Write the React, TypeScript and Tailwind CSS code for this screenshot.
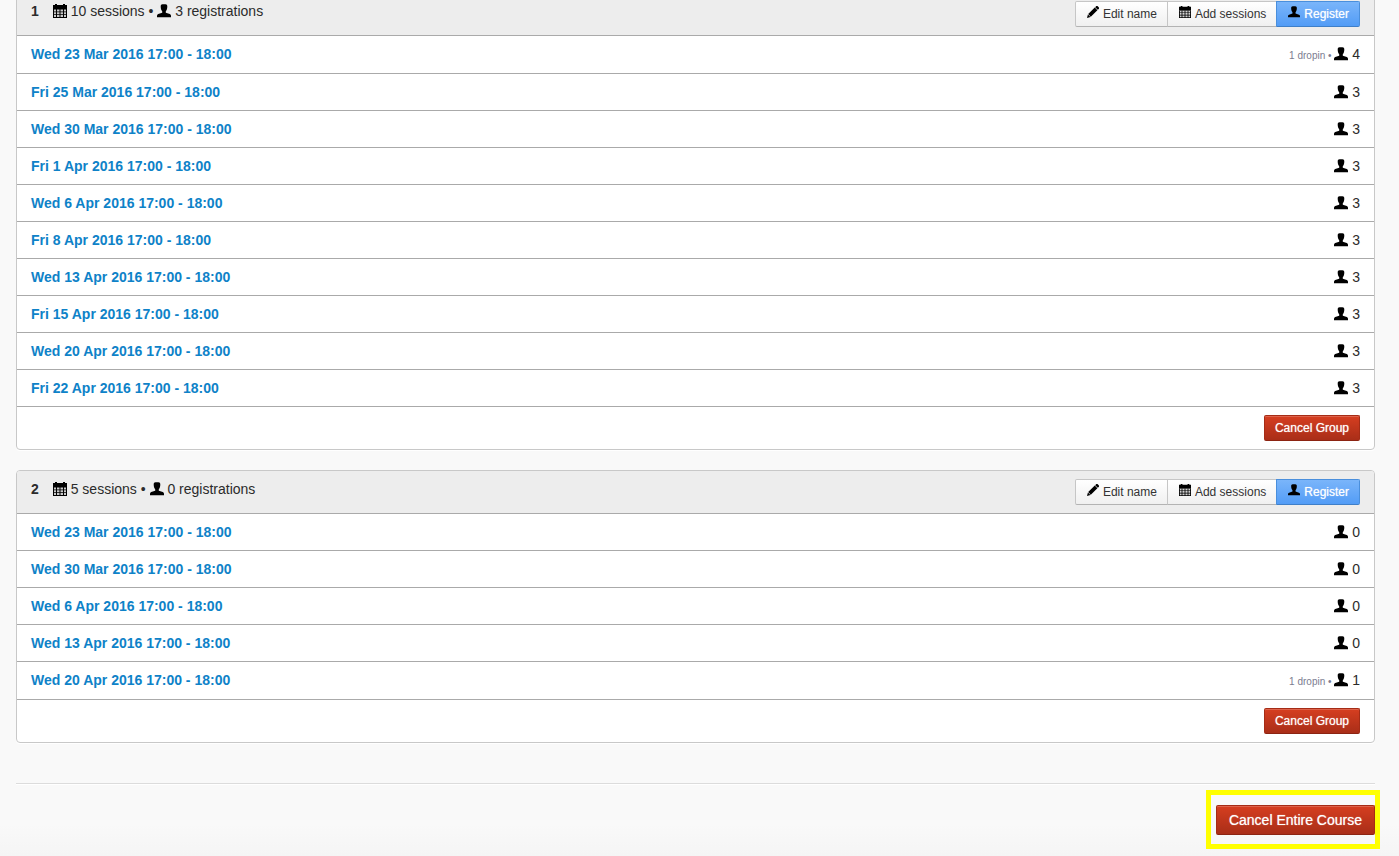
import type { ReactNode } from "react";
import clsx from "clsx";

interface Session {
  label: string;
  attendees: number;
  dropins?: number;
}

interface Group {
  name: string;
  registrations: number;
  sessions: Session[];
}

const groups: Group[] = [
  {
    name: "1",
    registrations: 3,
    sessions: [
      { label: "Wed 23 Mar 2016 17:00 - 18:00", attendees: 4, dropins: 1 },
      { label: "Fri 25 Mar 2016 17:00 - 18:00", attendees: 3 },
      { label: "Wed 30 Mar 2016 17:00 - 18:00", attendees: 3 },
      { label: "Fri 1 Apr 2016 17:00 - 18:00", attendees: 3 },
      { label: "Wed 6 Apr 2016 17:00 - 18:00", attendees: 3 },
      { label: "Fri 8 Apr 2016 17:00 - 18:00", attendees: 3 },
      { label: "Wed 13 Apr 2016 17:00 - 18:00", attendees: 3 },
      { label: "Fri 15 Apr 2016 17:00 - 18:00", attendees: 3 },
      { label: "Wed 20 Apr 2016 17:00 - 18:00", attendees: 3 },
      { label: "Fri 22 Apr 2016 17:00 - 18:00", attendees: 3 },
    ],
  },
  {
    name: "2",
    registrations: 0,
    sessions: [
      { label: "Wed 23 Mar 2016 17:00 - 18:00", attendees: 0 },
      { label: "Wed 30 Mar 2016 17:00 - 18:00", attendees: 0 },
      { label: "Wed 6 Apr 2016 17:00 - 18:00", attendees: 0 },
      { label: "Wed 13 Apr 2016 17:00 - 18:00", attendees: 0 },
      { label: "Wed 20 Apr 2016 17:00 - 18:00", attendees: 1, dropins: 1 },
    ],
  },
];

export default function App() {
  return (
    <div className="min-h-screen overflow-hidden bg-[linear-gradient(to_top,#f5f5f5,#f9f9f9_32px)] font-['Liberation_Sans',Arial,sans-serif] text-sm leading-5 text-[#2b2b2b]">
      <main className="-mt-2 pr-6 pb-5 pl-4">
        <div className="space-y-5">
          {groups.map((group) => (
            <GroupCard key={group.name} group={group} />
          ))}
        </div>

        {/* Course actions */}
        <div className="mt-10 flex justify-end border-t border-[#dcdcdc] pt-5 shadow-[inset_0_1px_0_#fff]">
          <div className="relative mt-px">
            <DangerButton large>Cancel Entire Course</DangerButton>
            <div className="pointer-events-none absolute -top-[15px] -right-[5px] -bottom-[14px] -left-[10px] border-5 border-[#ffff00]" />
          </div>
        </div>
      </main>
    </div>
  );
}

function GroupCard({ group }: { group: Group }) {
  return (
    <section className="overflow-hidden rounded border border-[#c8c8c8] bg-white shadow-[0_1px_0_#fff]">
      <header className="flex items-start justify-between border-b border-[#aaa] bg-[#ededed] px-3.5 py-2">
        <div className="flex gap-3.5">
          <h2 className="font-bold">{group.name}</h2>
          <p>
            <CalendarIcon className="h-3.5 w-3.5" /> {group.sessions.length} sessions •{" "}
            <UserIcon className="h-3.5 w-3.5" /> {group.registrations} registrations
          </p>
        </div>
        <div className="flex">
          <ToolbarButton className="rounded-l-xs">
            <PencilIcon className="-mt-1 h-3 w-3" />
            Edit name
          </ToolbarButton>
          <ToolbarButton className="-ml-px">
            <CalendarIcon className="-mt-1 h-3 w-3" />
            Add sessions
          </ToolbarButton>
          <ToolbarButton primary className="-ml-px rounded-r-xs">
            <UserIcon className="-mt-1 h-3 w-3" />
            Register
          </ToolbarButton>
        </div>
      </header>

      <ul>
        {group.sessions.map((session) => (
          <SessionRow key={session.label} session={session} />
        ))}
      </ul>

      <footer className="flex justify-end px-3.5 py-2">
        <DangerButton>Cancel Group</DangerButton>
      </footer>
    </section>
  );
}

function SessionRow({ session }: { session: Session }) {
  return (
    <li className="flex items-start justify-between border-b border-[#aaa] px-3.5 py-2">
      <a href="#" className="font-bold text-[#0e82c8]">
        {session.label}
      </a>
      <div className={session.dropins ? "h-[21px]" : "h-5"}>
        {session.dropins && <span className="text-[10px] text-[#7c7c90]">{session.dropins} dropin • </span>}
        <UserIcon className="h-3.5 w-3.5" /> {session.attendees}
      </div>
    </li>
  );
}

function ToolbarButton({ primary, className, children }: { primary?: boolean; className?: string; children: ReactNode }) {
  return (
    <button
      type="button"
      className={clsx(
        "flex h-[26px] items-center gap-1 border pr-2.5 pl-[11px] text-xs",
        primary
          ? "border-[#4a8fdc] border-b-[#3f7fc8] bg-linear-to-b from-[#7ab5fa] to-[#529cf6] text-white [text-shadow:0_0_1px_rgba(255,255,255,0.7)]"
          : "border-[#c6c6c6] border-b-[#b3b3b3] bg-linear-to-b from-white to-[#f0f0f0] text-[#333]",
        className
      )}
    >
      {children}
    </button>
  );
}

function DangerButton({ large, children }: { large?: boolean; children: ReactNode }) {
  return (
    <button
      type="button"
      className={clsx(
        "block rounded-xs border border-[#a52c16] border-b-[#8c2412] bg-linear-to-b from-[#d63e20] to-[#a92e18] text-white shadow-[inset_0_1px_0_rgba(255,255,255,0.2)] [text-shadow:0_0_1px_rgba(255,255,255,0.7)]",
        large ? "h-[30px] px-3 text-sm" : "h-[26px] px-2.5 text-xs"
      )}
    >
      {children}
    </button>
  );
}

function UserIcon({ className }: { className: string }) {
  return (
    <svg viewBox="0 0 14 14" aria-hidden="true" className={clsx("inline-block align-[-2px] text-black", className)}>
      <path
        fill="currentColor"
        d="M5.500.3h3c1.200 0 1.800.9 1.800 2 0 1.900-.3 3.700-1.500 4.900v1.500l4 1.400c.8.300 1.200.9 1.200 1.700v1.400H0v-1.400c0-.8.4-1.400 1.200-1.700l4-1.400V7.200C4 6 3.700 4.200 3.700 2.300c0-1.100.6-2 1.800-2z"
      />
    </svg>
  );
}

function CalendarIcon({ className }: { className: string }) {
  return (
    <svg viewBox="0 0 14 14" aria-hidden="true" className={clsx("inline-block align-[-2px] text-black", className)}>
      {/* rings and header bar */}
      <path fill="currentColor" d="M0 1h2V0h2v1h6V0h2v1h2v4H0z" />
      {/* day grid */}
      <path fill="currentColor" opacity="0.15" d="M0 5h14v9H0z" />
      <path
        fill="currentColor"
        fillRule="evenodd"
        d="M0 5h14v9H0zM1 5.500V7.500h2V5.500zm3 0v2h2.500v-2zm3.500 0v2H10v-2zm3.500 0v2h2v-2zM1 8.300v2h2v-2zm3 0v2h2.500v-2zm3.500 0v2H10v-2zm3.500 0v2h2v-2zM1 11.100v2h2v-2zm3 0v2h2.500v-2zm3.500 0v2H10v-2zm3.500 0v2h2v-2z"
      />
    </svg>
  );
}

function PencilIcon({ className }: { className: string }) {
  return (
    <svg viewBox="0 0 12 12" aria-hidden="true" className={clsx("inline-block text-black", className)}>
      <path
        fill="currentColor"
        d="M9.100.3c.5-.5 1.100-.5 1.600 0l1 1c.5.5.5 1.100 0 1.600l-.9.9-2.600-2.600zM7.800 1.600l2.600 2.600-6.600 6.500-2.600-2.600zM.9 8.500l2.600 2.600L0 12z"
      />
    </svg>
  );
}
